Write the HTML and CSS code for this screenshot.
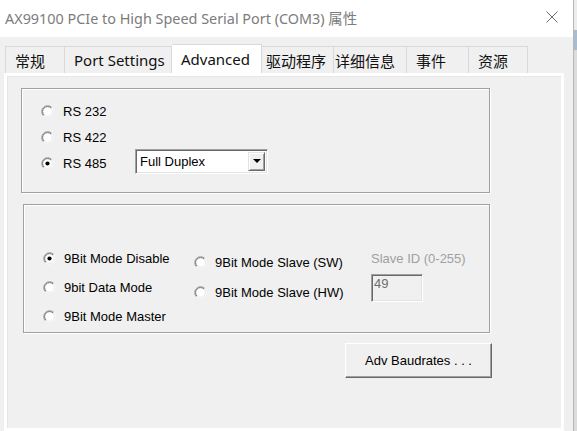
FILE: index.html
```html
<!DOCTYPE html>
<html>
<head>
<meta charset="utf-8">
<link rel="stylesheet" href="styles.css">
</head>
<body>
<svg class="defs" width="0" height="0" aria-hidden="true">
  <symbol id="radio" viewBox="0 0 13 13">
    <circle cx="6.5" cy="6.5" r="6" fill="#fff"/>
    <path d="M2.26 10.74A6 6 0 0 1 10.74 2.26" fill="none" stroke="#a0a0a0"/>
    <path d="M3 10A4.95 4.95 0 0 1 10 3" fill="none" stroke="#6e6e6e"/>
    <path d="M10 3A4.95 4.95 0 0 1 3 10" fill="none" stroke="#e6e6e6"/>
  </symbol>
  <symbol id="radio-on" viewBox="0 0 13 13">
    <use href="#radio"/>
    <circle cx="6.5" cy="6.5" r="2.1" fill="#000"/>
  </symbol>
</svg>
<div class="screen">
  <div class="window">
    <div class="titlebar">
      <span class="title">AX99100 PCIe to High Speed Serial Port (COM3) 属性</span>
      <svg class="close" viewBox="0 0 12 12"><path d="M0.5 0.5L11.5 11.5M11.5 0.5L0.5 11.5" stroke="#6e6e6e" stroke-width="1"/></svg>
    </div>
    <div class="tabs">
      <div class="tab t1">常规</div>
      <div class="tab t2">Port Settings</div>
      <div class="tab t3 active">Advanced</div>
      <div class="tab t4">驱动程序</div>
      <div class="tab t5">详细信息</div>
      <div class="tab t6">事件</div>
      <div class="tab t7">资源</div>
    </div>
    <div class="panel">
      <div class="page">
        <div class="group g1">
          <div class="opt"><svg class="radio"><use href="#radio"/></svg><span class="lbl">RS 232</span></div>
          <div class="opt"><svg class="radio"><use href="#radio"/></svg><span class="lbl">RS 422</span></div>
          <div class="opt"><svg class="radio"><use href="#radio-on"/></svg><span class="lbl fixed">RS 485</span>
            <div class="select"><span>Full Duplex</span><span class="arrow"></span></div>
          </div>
        </div>
        <div class="group g2">
          <div class="col col1">
            <div class="opt"><svg class="radio"><use href="#radio-on"/></svg><span class="lbl">9Bit Mode Disable</span></div>
            <div class="opt"><svg class="radio"><use href="#radio"/></svg><span class="lbl">9bit Data Mode</span></div>
            <div class="opt"><svg class="radio"><use href="#radio"/></svg><span class="lbl">9Bit Mode Master</span></div>
          </div>
          <div class="col col2">
            <div class="opt"><svg class="radio"><use href="#radio"/></svg><span class="lbl">9Bit Mode Slave (SW)</span></div>
            <div class="opt"><svg class="radio"><use href="#radio"/></svg><span class="lbl">9Bit Mode Slave (HW)</span></div>
          </div>
          <div class="col col3">
            <div class="slave-label">Slave ID (0-255)</div>
            <div class="edit">49</div>
          </div>
        </div>
        <div class="adv">Adv Baudrates . . .</div>
      </div>
    </div>
  </div>
  <div class="edge"></div>
</div>
</body>
</html>
```
FILE: styles.css
```css
* { box-sizing: border-box; }
html, body { margin: 0; padding: 0; }
body {
  width: 577px;
  height: 431px;
  overflow: hidden;
  background: #f0f0f0;
  font-family: "Liberation Sans", Arial, sans-serif;
  font-size: 13px;
  color: #000;
}
.defs { position: absolute; width: 0; height: 0; overflow: hidden; }
.screen { display: flex; height: 431px; }
.window { flex: 1; min-width: 0; display: flex; flex-direction: column; background: #f0f0f0; }
.edge {
  width: 4px;
  border-left: 1px solid #b8b8b8;
  background: linear-gradient(#ececec 0 30px, #a9bccd 30px 50px, #dcdcdc 50px);
}
.titlebar {
  height: 37px;
  flex: none;
  background: #fff;
  display: flex;
  align-items: center;
  justify-content: space-between;
  padding: 0 15px 3px 5px;
}
.title {
  font-family: "Noto Sans", "Noto Sans CJK SC", sans-serif;
  font-size: 14.4px;
  color: #7c7c7c;
  white-space: nowrap;
}
.close { width: 12px; height: 12px; display: block; }
.tabs {
  flex: none;
  display: flex;
  align-items: flex-end;
  height: 36px;
  padding-left: 5px;
  font-family: "Noto Sans", "Noto Sans CJK SC", sans-serif;
  font-size: 15px;
  color: #111;
}
.tab {
  height: 27px;
  border-right: 1px solid #d9d9d9;
  border-top: 1px solid #d9d9d9;
  display: flex;
  align-items: center;
  padding-left: 9px;
  white-space: nowrap;
  background: #f0f0f0;
}
.t1 { width: 60px; border-left: 1px solid #d9d9d9; }
.t2 { width: 107px; }
.t3 { width: 90px; }
.t4 { width: 72px; padding-left: 4px; }
.t5 { width: 73px; padding-left: 1px; }
.t6 { width: 62px; }
.t7 { width: 59px; }
.tab.active { height: 29px; background: #fff; }
.panel {
  flex: 1;
  margin: 0 9px 0 4px;
  border: 3px solid #fff;
  box-shadow: inset 1px 1px 0 #e6e6e6;
}
.page { padding: 12px 0 0 14px; }
.group {
  border: 1px solid #a0a0a0;
  box-shadow: inset 1px 1px 0 #fff, 1px 1px 0 #fff;
}
.g1 { width: 469px; height: 105px; padding: 9px 0 0 19px; }
.g2 {
  width: 467px;
  height: 129px;
  margin: 11px 0 0 2px;
  display: flex;
  padding-left: 19px;
}
.opt { display: flex; align-items: center; height: 26px; white-space: nowrap; }
.radio { width: 13px; height: 13px; flex: none; display: block; }
.lbl { margin-left: 9px; }
.lbl.fixed { width: 72px; flex: none; }
.g2 .lbl { margin-left: 8px; }
.col1 { width: 151px; padding-top: 39px; flex: none; }
.col1 .opt { height: 29px; }
.col2 { width: 177px; padding-top: 42px; flex: none; }
.col2 .opt { height: 30px; }
.col3 { padding-top: 46px; }
.slave-label { color: #a0a0a0; line-height: 16px; white-space: nowrap; }
.select {
  width: 133px;
  height: 25px;
  margin-bottom: 4px;
  background: #fff;
  border-top: 1px solid #a0a0a0;
  border-left: 1px solid #a0a0a0;
  border-right: 1px solid #fff;
  border-bottom: 1px solid #fff;
  box-shadow: inset 1px 1px 0 #696969, inset -1px -1px 0 #e3e3e3;
  display: flex;
  align-items: center;
  justify-content: space-between;
  padding: 1px 2px 1px 4px;
}
.arrow {
  width: 17px;
  height: 19px;
  background: #f0f0f0;
  border-top: 1px solid #e3e3e3;
  border-left: 1px solid #e3e3e3;
  border-right: 1px solid #696969;
  border-bottom: 1px solid #696969;
  box-shadow: inset 1px 1px 0 #fff, inset -1px -1px 0 #a0a0a0;
  display: flex;
  align-items: center;
  justify-content: center;
}
.arrow::after {
  content: "";
  border-left: 4px solid transparent;
  border-right: 4px solid transparent;
  border-top: 4px solid #000;
}
.edit {
  margin-top: 7px;
  width: 52px;
  height: 28px;
  background: #f0f0f0;
  border-top: 1px solid #a0a0a0;
  border-left: 1px solid #a0a0a0;
  border-right: 1px solid #fff;
  border-bottom: 1px solid #fff;
  box-shadow: inset 1px 1px 0 #696969, inset -1px -1px 0 #e3e3e3;
  color: #6d6d6d;
  padding: 1px 0 0 2px;
  line-height: 16px;
}
.adv {
  margin: 10px 0 0 324px;
  width: 147px;
  height: 35px;
  background: #f0f0f0;
  border-top: 1px solid #fff;
  border-left: 1px solid #fff;
  border-right: 1px solid #696969;
  border-bottom: 1px solid #696969;
  box-shadow: inset -1px -1px 0 #a0a0a0;
  display: flex;
  align-items: center;
  justify-content: center;
  white-space: nowrap;
}
```
